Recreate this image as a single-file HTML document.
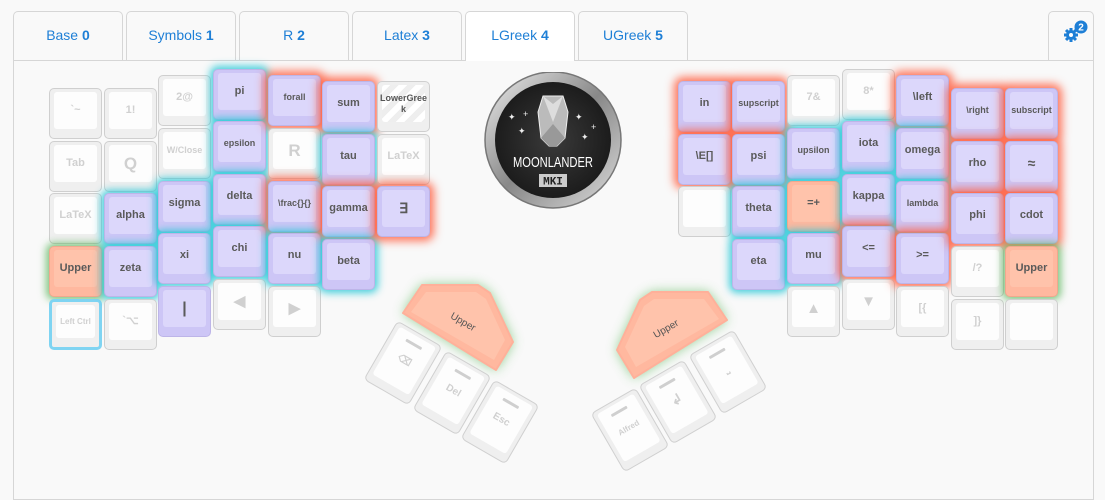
<!DOCTYPE html>
<html><head><meta charset="utf-8">
<style>
*{box-sizing:border-box}
body{margin:0;width:1105px;height:490px;background:#f9f9f9;font-family:"Liberation Sans",sans-serif;position:relative;overflow:hidden}
.tab{position:absolute;top:11px;height:49px;width:110px;border:1px solid #d6d6d6;border-bottom:none;border-radius:5px 5px 0 0;background:#f9f9f9;color:#1e7fd6;font-size:14px;text-align:center;line-height:46px}
.tab b{font-weight:bold}
.tab.on{background:#fff;height:50px;z-index:3}
.panel{position:absolute;left:13px;top:60px;width:1081px;height:440px;border:1px solid #d6d6d6;background:#f9f9f9}
.k{position:absolute;width:53px;height:51px;border:1px solid #cfcfcf;border-radius:5px;background:#efefef}
.k span{position:absolute;left:4px;right:4px;top:3px;bottom:9px;border-radius:3px;background:#fdfdfd;display:flex;align-items:center;justify-content:center;text-align:center;font-size:11px;font-weight:bold;color:#d0d0d0;line-height:11px}
.p{background:#cdc6f6;border-color:#bdb5e8}
.p span{background:#dcd7fb;color:#5a5a5a}
.o{background:#ffb89f;border-color:#f0a88e}
.o span{background:#ffc3ab;color:#5a5a5a}
.s span{font-size:9px}
.r{box-shadow:0 0 9px 4px rgba(255,95,65,.85)}
.c{box-shadow:0 0 8px 3px rgba(40,200,215,.85)}
.g{box-shadow:0 0 8px 3px rgba(90,180,90,.75)}
.big span{font-size:17px}
.tk{position:absolute;width:52px;height:68px;border:1px solid #d0d0d0;border-radius:5px;background:#efefef}
.tk span{position:absolute;left:4px;right:4px;top:3px;bottom:8px;background:#fdfdfd;border-radius:3px;color:#d0d0d0;font-size:10px;font-weight:bold;display:flex;align-items:center;justify-content:center}
.tk i{position:absolute;left:16px;top:10px;width:18px;height:3px;background:#cfcfcf;border-radius:1px}
</style></head><body>
<div class="panel"></div>
<div class="tab" style="left:13px">Base <b>0</b></div>
<div class="tab" style="left:126px">Symbols <b>1</b></div>
<div class="tab" style="left:239px">R <b>2</b></div>
<div class="tab" style="left:352px">Latex <b>3</b></div>
<div class="tab on" style="left:465px">LGreek <b>4</b></div>
<div class="tab" style="left:578px">UGreek <b>5</b></div>
<div class="tab" style="left:1048px;width:46px"></div>
<svg style="position:absolute;left:1062px;top:20px" width="28" height="24" viewBox="0 0 28 24">
<g fill="#1e7fd6" transform="translate(9,15)"><circle r="5"/><g stroke="#1e7fd6" stroke-width="3"><line x1="-7" y1="0" x2="7" y2="0"/><line x1="0" y1="-7" x2="0" y2="7"/><line x1="-5" y1="-5" x2="5" y2="5"/><line x1="-5" y1="5" x2="5" y2="-5"/></g><circle r="2" fill="#fff"/></g>
<circle cx="19" cy="7" r="6.5" fill="#1e7fd6"/><text x="19" y="10.5" fill="#fff" font-size="10" font-weight="bold" text-anchor="middle" font-family="Liberation Sans">2</text></svg>

<div class="k" style="left:49px;top:88px"><span>`~</span></div>
<div class="k" style="left:49px;top:141px"><span>Tab</span></div>
<div class="k" style="left:49px;top:193px"><span>LaTeX</span></div>
<div class="k o g" style="left:49px;top:246px"><span>Upper</span></div>
<div class="k" style="left:49px;top:299px;border:3px solid #7fd4f2"><span style="font-size:8px">Left Ctrl</span></div>
<div class="k" style="left:104px;top:88px"><span>1!</span></div>
<div class="k big" style="left:104px;top:141px"><span>Q</span></div>
<div class="k p c" style="left:104px;top:193px"><span>alpha</span></div>
<div class="k p c" style="left:104px;top:246px"><span>zeta</span></div>
<div class="k" style="left:104px;top:299px"><span>`⌥</span></div>
<div class="k" style="left:158px;top:75px"><span>2@</span></div>
<div class="k s" style="left:158px;top:128px"><span>W/Close</span></div>
<div class="k p c" style="left:158px;top:181px"><span>sigma</span></div>
<div class="k p c" style="left:158px;top:233px"><span>xi</span></div>
<div class="k p" style="left:158px;top:286px"><span style="font-size:16px">|</span></div>
<div class="k p c" style="left:213px;top:69px"><span>pi</span></div>
<div class="k p c s" style="left:213px;top:121px"><span>epsilon</span></div>
<div class="k p c" style="left:213px;top:174px"><span>delta</span></div>
<div class="k p c" style="left:213px;top:226px"><span>chi</span></div>
<div class="k" style="left:213px;top:279px"><span style="font-size:15px">◀</span></div>
<div class="k p r s" style="left:268px;top:75px"><span>forall</span></div>
<div class="k big" style="left:268px;top:128px"><span>R</span></div>
<div class="k p r s" style="left:268px;top:181px"><span>\frac{}{}</span></div>
<div class="k p c" style="left:268px;top:233px"><span>nu</span></div>
<div class="k" style="left:268px;top:286px"><span style="font-size:15px">▶</span></div>
<div class="k p r" style="left:322px;top:81px"><span>sum</span></div>
<div class="k p c" style="left:322px;top:134px"><span>tau</span></div>
<div class="k p r" style="left:322px;top:186px"><span>gamma</span></div>
<div class="k p c" style="left:322px;top:239px"><span>beta</span></div>
<div class="k s" style="left:377px;top:81px"><span style="background:repeating-linear-gradient(135deg,#fff 0 6px,#eee 6px 12px);color:#555">LowerGree<br>k</span></div>
<div class="k" style="left:377px;top:134px"><span>LaTeX</span></div>
<div class="k p r" style="left:377px;top:186px"><span style="font-size:14px">∃</span></div>

<div class="k p r" style="left:678px;top:81px"><span>in</span></div>
<div class="k p r" style="left:678px;top:134px"><span>\E[]</span></div>
<div class="k" style="left:678px;top:186px"><span></span></div>
<div class="k p r s" style="left:732px;top:81px"><span>supscript</span></div>
<div class="k p r" style="left:732px;top:134px"><span>psi</span></div>
<div class="k p c" style="left:732px;top:186px"><span>theta</span></div>
<div class="k p c" style="left:732px;top:239px"><span>eta</span></div>
<div class="k" style="left:787px;top:75px"><span>7&amp;</span></div>
<div class="k p c s" style="left:787px;top:128px"><span>upsilon</span></div>
<div class="k o c" style="left:787px;top:181px"><span>=+</span></div>
<div class="k p c" style="left:787px;top:233px"><span>mu</span></div>
<div class="k" style="left:787px;top:286px"><span style="font-size:15px">▲</span></div>
<div class="k" style="left:842px;top:69px"><span>8*</span></div>
<div class="k p c" style="left:842px;top:121px"><span>iota</span></div>
<div class="k p c" style="left:842px;top:174px"><span>kappa</span></div>
<div class="k p r" style="left:842px;top:226px"><span>&lt;=</span></div>
<div class="k" style="left:842px;top:279px"><span style="font-size:15px">▼</span></div>
<div class="k p r" style="left:896px;top:75px"><span>\left</span></div>
<div class="k p c" style="left:896px;top:128px"><span>omega</span></div>
<div class="k p c s" style="left:896px;top:181px"><span>lambda</span></div>
<div class="k p r" style="left:896px;top:233px"><span>&gt;=</span></div>
<div class="k" style="left:896px;top:286px"><span>[{</span></div>
<div class="k p r s" style="left:951px;top:88px"><span>\right</span></div>
<div class="k p r" style="left:951px;top:141px"><span>rho</span></div>
<div class="k p r" style="left:951px;top:193px"><span>phi</span></div>
<div class="k" style="left:951px;top:246px"><span>/?</span></div>
<div class="k" style="left:951px;top:299px"><span>]}</span></div>
<div class="k p r s" style="left:1005px;top:88px"><span>subscript</span></div>
<div class="k p r" style="left:1005px;top:141px"><span style="font-size:14px">≈</span></div>
<div class="k p r" style="left:1005px;top:193px"><span>cdot</span></div>
<div class="k o g" style="left:1005px;top:246px"><span>Upper</span></div>
<div class="k" style="left:1005px;top:299px"><span></span></div>

<svg style="position:absolute;left:483px;top:72px" width="140" height="140" viewBox="0 0 140 140">
<defs><linearGradient id="rg" x1="0" y1="0" x2="1" y2="1"><stop offset="0" stop-color="#eee"/><stop offset=".5" stop-color="#888"/><stop offset="1" stop-color="#ddd"/></linearGradient>
<radialGradient id="dk"><stop offset="0" stop-color="#3a3a3a"/><stop offset="1" stop-color="#1c1c1c"/></radialGradient></defs>
<circle cx="70" cy="68" r="68" fill="url(#rg)" stroke="#777" stroke-width="1.5"/>
<circle cx="70" cy="68" r="58" fill="url(#dk)"/>
<polygon points="60,24 80,24 85,40 82,66 74,74 66,74 58,66 55,40" fill="#bbb" stroke="#eee" stroke-width="1"/>
<polygon points="60,24 70,32 80,24 70,50" fill="#ddd"/>
<polygon points="58,66 70,52 82,66 74,74 66,74" fill="#999"/>
<g fill="#eee" font-size="9"><text x="25" y="48">✦</text><text x="35" y="62">✦</text><text x="40" y="45">+</text><text x="92" y="48">✦</text><text x="98" y="68">✦</text><text x="108" y="58">+</text></g>
<text x="70" y="95" fill="#fff" font-size="15" text-anchor="middle" font-family="Liberation Sans" textLength="80" lengthAdjust="spacingAndGlyphs">MOONLANDER</text>
<rect x="56" y="102" width="28" height="13" fill="#ccc"/><text x="70" y="112.5" fill="#222" font-size="11" font-weight="bold" text-anchor="middle" font-family="Liberation Mono">MKI</text>
</svg>

<svg style="position:absolute;left:0;top:0" width="1105" height="490">
<defs><filter id="gl" x="-30%" y="-30%" width="160%" height="160%"><feGaussianBlur stdDeviation="6"/></filter></defs>
<polygon points="403,313 422,285 478,285 490,293 513,342 496,370" fill="#70c070" opacity=".8" filter="url(#gl)"/>
<polygon points="403,313 422,285 478,285 490,293 513,342 496,370" fill="#ffb89f" stroke="#ffb09a" stroke-width="2" stroke-linejoin="round"/>
<polygon points="411,312 426,292 476,292 486,299 505,340 494,360" fill="#ffc3ab"/>
<text x="463" y="325" font-size="10" fill="#555" font-family="Liberation Sans" text-anchor="middle" transform="rotate(30 463 322)">Upper</text>
<polygon points="727,320 708,292 652,292 640,300 617,350 634,378" fill="#70c070" opacity=".8" filter="url(#gl)"/>
<polygon points="727,320 708,292 652,292 640,300 617,350 634,378" fill="#ffb89f" stroke="#ffb09a" stroke-width="2" stroke-linejoin="round"/>
<polygon points="719,319 704,299 654,299 644,306 625,347 636,367" fill="#ffc3ab"/>
<text x="666" y="332" font-size="10" fill="#555" font-family="Liberation Sans" text-anchor="middle" transform="rotate(-30 666 329)">Upper</text>
</svg>
<div class="tk" style="left:377px;top:329px;transform:rotate(30deg)"><span>⌫</span><i></i></div>
<div class="tk" style="left:426px;top:359px;transform:rotate(30deg)"><span>Del</span><i></i></div>
<div class="tk" style="left:474px;top:388px;transform:rotate(30deg)"><span>Esc</span><i></i></div>
<div class="tk" style="left:604px;top:396px;transform:rotate(-30deg)"><span style="font-size:8px">Alfred</span><i></i></div>
<div class="tk" style="left:652px;top:368px;transform:rotate(-30deg)"><span style="font-size:14px">↲</span><i></i></div>
<div class="tk" style="left:702px;top:338px;transform:rotate(-30deg)"><span>⎵</span><i></i></div>
</body></html>
